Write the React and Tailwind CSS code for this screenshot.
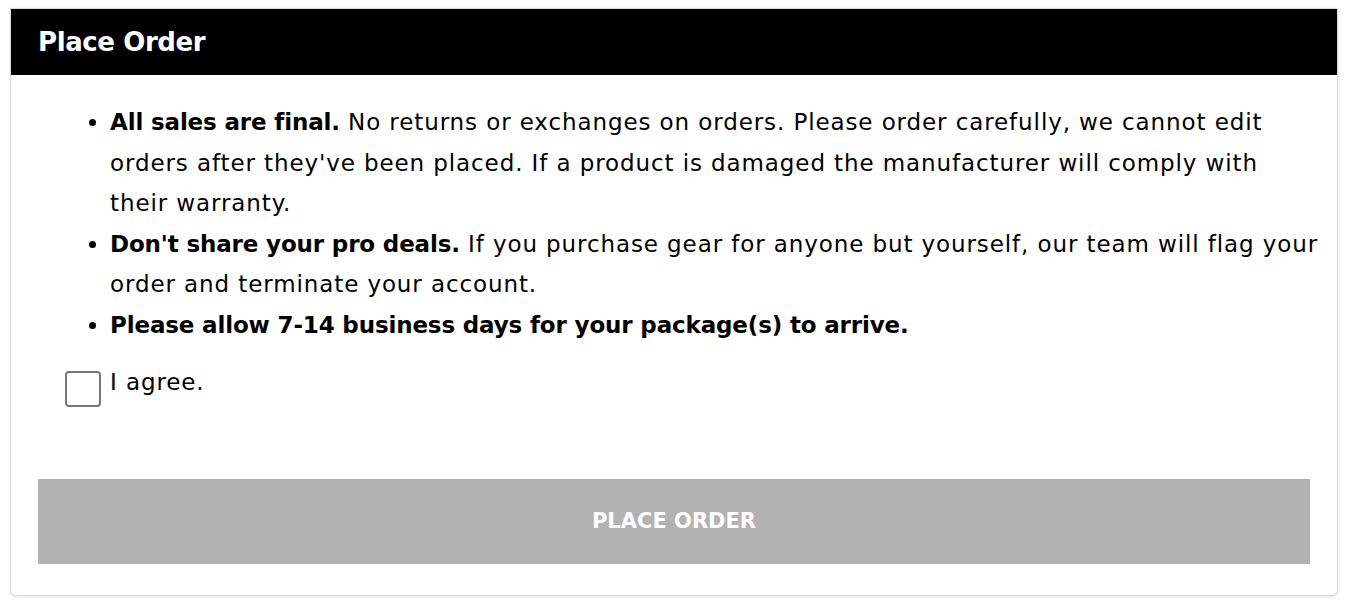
const font = { fontFamily: '"DejaVu Sans", "Open Sans", sans-serif' };

const terms = [
  {
    bold: 'All sales are final.',
    text: " No returns or exchanges on orders. Please order carefully, we cannot edit orders after they've been placed. If a product is damaged the manufacturer will comply with their warranty.",
  },
  {
    bold: "Don't share your pro deals.",
    text: ' If you purchase gear for anyone but yourself, our team will flag your order and terminate your account.',
  },
  { bold: 'Please allow 7-14 business days for your package(s) to arrive.', text: '' },
];

export default function App() {
  return (
    <div className="bg-white min-h-[608px] pt-[8px] pl-[10px]" style={font}>
      <div className="w-[1328px] border border-[#dcdcdc] rounded-b-[6px] shadow-[0_1px_3px_rgba(0,0,0,0.12)] bg-white">
        <div className="bg-black h-[66px] flex items-center px-[27px]">
          <h2 className="text-white text-[26px] font-semibold tracking-[-0.4px]">Place Order</h2>
        </div>
        <div className="px-[27px] pt-[27px] pb-[31px]">
          <ul className="list-disc pl-[72px] mr-[-12px] text-[23px] leading-[40.5px] text-black tracking-[0.9px]">
            {terms.map((t) => (
              <li key={t.bold}>
                <b className="font-bold tracking-[-0.15px]">{t.bold}</b>
                {t.text}
              </li>
            ))}
          </ul>
          <label className="flex items-start gap-[9px] mt-[17px] pl-[27px] text-[23px] leading-[40px] tracking-[0.9px]">
            <span className="mt-[9px] w-[36px] h-[36px] rounded-[4px] border-2 border-[#777] shrink-0" />
            <span>I agree.</span>
          </label>
          <button className="mt-[72px] w-full h-[85px] bg-[#b2b2b2] text-white text-[21px] font-bold uppercase">
            Place Order
          </button>
        </div>
      </div>
    </div>
  );
}
